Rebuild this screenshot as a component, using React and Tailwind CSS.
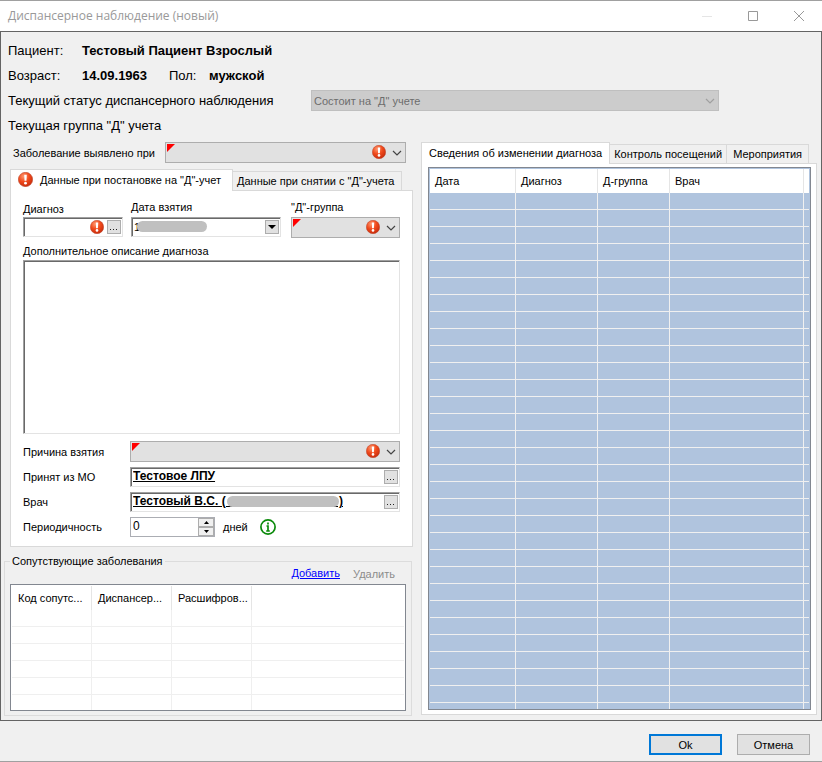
import clsx from 'clsx'

const HISTORY_COLUMNS = [
  { label: 'Дата', width: 'w-[86px]' },
  { label: 'Диагноз', width: 'w-[82px]' },
  { label: 'Д-группа', width: 'w-[72px]' },
  { label: 'Врач', width: '' },
]
const RELATED_COLUMNS = ['Код сопутс...', 'Диспансер...', 'Расшифров...']

function ErrorIcon({ className, id }) {
  return (
    <svg viewBox="0 0 14 14" className={className} role="img" aria-label="Ошибка">
      <defs>
        <radialGradient id={id} cx="0.38" cy="0.28" r="0.75">
          <stop offset="0" stopColor="#ff9a72" />
          <stop offset="0.5" stopColor="#f04a1c" />
          <stop offset="1" stopColor="#c82c0c" />
        </radialGradient>
      </defs>
      <circle cx="7" cy="7" r="6.7" fill={`url(#${id})`} stroke="#b8432a" strokeWidth="0.5" />
      <path d="M5.8 2.6h2.4l-.3 5.6H6.1z" fill="#fff" />
      <circle cx="7" cy="10.4" r="1.3" fill="#fff" />
    </svg>
  )
}

function Chevron({ className }) {
  return (
    <svg viewBox="0 0 10 6" className={clsx('w-[10px] h-[6px]', className)} fill="none" stroke="currentColor" strokeWidth="1.2">
      <path d="M1 1l4 4 4-4" />
    </svg>
  )
}

// Обязательный выпадающий список с признаком ошибки
function RequiredSelect({ id, label }) {
  return (
    <div className="relative w-full h-[21px]">
      <select id={id} aria-label={label} className="block w-full h-full appearance-none bg-[#e1e1e1] border border-[#adadad] outline-none">
        <option value=""></option>
      </select>
      <svg viewBox="0 0 8 8" className="absolute left-[2px] top-[2px] w-[8px] h-[8px] pointer-events-none">
        <path d="M0 0h8L0 8z" fill="#f00" />
      </svg>
      <ErrorIcon id={`${id}-err`} className="absolute right-[20px] top-[3px] w-[14px] h-[14px] pointer-events-none" />
      <Chevron className="absolute right-[4px] top-[8px] text-[#444] pointer-events-none" />
    </div>
  )
}

function Sunken({ className, children }) {
  return (
    <div className={clsx('flex items-center h-[20px] bg-white border border-t-[#a0a0a0] border-l-[#a0a0a0] border-r-[#e3e3e3] border-b-[#e3e3e3] shadow-[inset_1px_1px_0_#696969]', className)}>
      {children}
    </div>
  )
}

function MoreButton({ label }) {
  return (
    <button aria-label={label} className="shrink-0 w-[14px] h-[14px] mr-px bg-[#e1e1e1] border border-[#adadad] flex items-center justify-center">
      <svg viewBox="0 0 10 10" className="w-[10px] h-[10px]" fill="#222">
        <path d="M1 7h1v1H1zM4 7h1v1H4zM7 7h1v1H7z" />
      </svg>
    </button>
  )
}

function Tab({ active, className, children }) {
  return (
    <button
      role="tab"
      aria-selected={active}
      className={clsx(
        'flex items-center border border-b-0 border-[#d9d9d9] whitespace-nowrap',
        active ? 'relative z-10 h-[22px] -mb-px pb-[2px] bg-white' : 'h-[19px] bg-[#f0f0f0]',
        className,
      )}
    >
      {children}
    </button>
  )
}

function PatientHeader() {
  return (
    <section className="text-[13px] leading-[25px] whitespace-nowrap">
      <div className="flex">
        <span className="w-[74px]">Пациент:</span>
        <b>Тестовый Пациент Взрослый</b>
      </div>
      <div className="flex">
        <span className="w-[74px]">Возраст:</span>
        <b className="w-[87px]">14.09.1963</b>
        <span className="w-[40px]">Пол:</span>
        <b>мужской</b>
      </div>
      <div className="flex items-center h-[25px]">
        <label htmlFor="status" className="w-[303px]">Текущий статус диспансерного наблюдения</label>
        <div className="relative w-[408px]">
          <select id="status" disabled className="block w-full h-[21px] px-[2px] appearance-none bg-[#ccc] border border-[#bfbfbf] text-[11px] leading-[18px] text-[#6d6d6d] opacity-100">
            <option>Состоит на "Д" учете</option>
          </select>
          <Chevron className="absolute right-[4px] top-[8px] text-[#a0a0a0]" />
        </div>
      </div>
      <div>Текущая группа "Д" учета</div>
    </section>
  )
}

function RegistrationForm() {
  return (
    <div className="bg-white border border-[#d9d9d9] pl-[12px] pr-[12px] pt-[8px] pb-[9px]">
      <div className="flex gap-[8px]">
        <div className="w-[100px]">
          <label htmlFor="diagnosis" className="block h-[18px] leading-[20px]">Диагноз</label>
          <Sunken>
            <input id="diagnosis" className="flex-1 min-w-0 px-[2px] bg-transparent outline-none" />
            <ErrorIcon id="diagnosis-err" className="shrink-0 w-[14px] h-[14px] mr-[3px]" />
            <MoreButton label="Выбрать диагноз" />
          </Sunken>
        </div>
        <div className="w-[150px]">
          <label htmlFor="date" className="block h-[18px] leading-[16px]">Дата взятия</label>
          <Sunken className="relative">
            <input id="date" defaultValue="1" className="flex-1 min-w-0 px-[2px] bg-transparent outline-none" />
            <span className="absolute left-[5px] top-[3px] w-[70px] h-[11px] rounded-full bg-[#c0c0c0]" />
            <button aria-label="Открыть календарь" className="shrink-0 w-[14px] h-[14px] mr-px bg-[#e1e1e1] border border-[#adadad] flex items-center justify-center">
              <svg viewBox="0 0 8 4" className="w-[8px] h-[4px]"><path d="M0 0h8L4 4z" /></svg>
            </button>
          </Sunken>
        </div>
        <div className="flex-1 ml-[2px]">
          <label htmlFor="group" className="block h-[18px] leading-[16px]">"Д"-группа</label>
          <RequiredSelect id="group" />
        </div>
      </div>

      <label htmlFor="description" className="block mt-[4px] h-[18px] leading-[18px]">Дополнительное описание диагноза</label>
      <textarea id="description" className="block w-full h-[174px] resize-none bg-white border border-t-[#a0a0a0] border-l-[#a0a0a0] border-r-[#e3e3e3] border-b-[#e3e3e3] shadow-[inset_1px_1px_0_#696969] outline-none" />

      <div className="mt-[7px] grid grid-cols-[107px_1fr] items-center gap-y-[5px]">
        <label htmlFor="reason">Причина взятия</label>
        <RequiredSelect id="reason" />
        <label htmlFor="org">Принят из МО</label>
        <Sunken>
          <input id="org" defaultValue="Тестовое ЛПУ" className="flex-1 min-w-0 px-[2px] pb-[2px] bg-transparent font-bold text-[12px] leading-[14px] underline outline-none" />
          <MoreButton label="Выбрать МО" />
        </Sunken>
        <label htmlFor="doctor">Врач</label>
        <Sunken className="relative">
          <input id="doctor" defaultValue="Тестовый В.С. (                                  )" className="flex-1 min-w-0 px-[2px] pb-[2px] bg-transparent font-bold text-[12px] leading-[14px] underline outline-none" />
          <span className="absolute left-[96px] top-[3px] w-[112px] h-[11px] rounded-full bg-[#c0c0c0]" />
          <MoreButton label="Выбрать врача" />
        </Sunken>
        <label htmlFor="period">Периодичность</label>
        <div className="flex items-center">
          <div className="flex w-[85px] h-[20px] bg-white border border-[#abadb3]">
            <input id="period" defaultValue="0" className="flex-1 min-w-0 px-[2px] pb-[2px] text-[12px] outline-none" />
            <div className="flex flex-col w-[16px]">
              <button aria-label="Больше" className="flex-1 flex items-center justify-center bg-[#f0f0f0] border border-[#adadad]">
                <svg viewBox="0 0 5 3" className="w-[5px] h-[3px]"><path d="M2.5 0L5 3H0z" /></svg>
              </button>
              <button aria-label="Меньше" className="flex-1 flex items-center justify-center bg-[#f0f0f0] border border-[#adadad]">
                <svg viewBox="0 0 5 3" className="w-[5px] h-[3px]"><path d="M0 0h5L2.5 3z" /></svg>
              </button>
            </div>
          </div>
          <span className="ml-[8px]">дней</span>
          <svg viewBox="0 0 16 16" className="ml-[12px] w-[16px] h-[16px]" fill="none" stroke="#0a8a0a">
            <circle cx="8" cy="8" r="7.1" strokeWidth="1.7" />
            <path d="M8 3.6v1.8M6.5 7H8v5M6.2 12h3.6" strokeWidth="1.7" />
          </svg>
        </div>
      </div>
    </div>
  )
}

function RelatedDiseases() {
  return (
    <fieldset className="relative mt-[6px] ml-[-6px] mr-px border border-[#dcdcdc] px-[5px] pb-[4px]">
      <legend className="px-[2px] leading-[16px]">Сопутствующие заболевания</legend>
      <div className="-mt-[5px] flex justify-end gap-[13px] pr-[11px] h-[20px] leading-[18px]">
        <a href="#add" className="text-[#00f] underline">Добавить</a>
        <button disabled className="text-[#8c8c8c]">Удалить</button>
      </div>
      <div className="h-[127px] overflow-hidden bg-white border border-[#828790] p-px">
        <table className="w-full table-fixed border-separate border-spacing-0">
          <thead>
            <tr className="h-[24px]">
              {RELATED_COLUMNS.map(label => (
                <th key={label} className="w-[80px] pl-[6px] p-0 text-left font-normal whitespace-nowrap border-r border-[#e5e5e5]">{label}</th>
              ))}
              <th className="p-0" />
            </tr>
          </thead>
          <tbody>
            {Array.from({ length: 6 }, (_, i) => (
              <tr key={i} className="h-[17px]">
                {[0, 1, 2, 3].map(c => (
                  <td key={c} className={clsx('p-0 border-b border-[#efefef]', c < 3 && 'border-r')} />
                ))}
              </tr>
            ))}
          </tbody>
        </table>
      </div>
    </fieldset>
  )
}

function HistoryTable() {
  return (
    <div className="bg-white border border-[#d9d9d9] px-[5px] pl-[6px] pt-[3px] pb-[4px]">
      <div className="h-[543px] overflow-hidden bg-[#b0c4de] border border-[#828790] p-px">
        <table className="w-full table-fixed border-separate border-spacing-0">
          <thead>
            <tr className="h-[24px] bg-white">
              {HISTORY_COLUMNS.map(col => (
                <th key={col.label} className={clsx('pl-[5px] p-0 text-left font-normal border-r border-[#e5e5e5]', col.width)}>{col.label}</th>
              ))}
              <th className="w-[5px] p-0" />
            </tr>
          </thead>
          <tbody>
            {Array.from({ length: 31 }, (_, i) => (
              <tr key={i} className="h-[17px]">
                {[0, 1, 2, 3, 4].map(c => (
                  <td key={c} className={clsx('p-0 border-b border-[#f0f0f0]', c < 4 && 'border-r')} />
                ))}
              </tr>
            ))}
          </tbody>
        </table>
      </div>
    </div>
  )
}

export default function App() {
  return (
    <div className="min-h-screen flex flex-col bg-[#f0f0f0] border-y border-[#a0a0a0] font-['Liberation_Sans',Arial,sans-serif] text-[11px] leading-[14px] text-black">
      <header className="flex items-center h-[30px] bg-white pl-[8px] pr-[18px] text-[#999]">
        <h1 className="flex-1 font-['Open_Sans','Noto_Sans',sans-serif] text-[12px] leading-[16px]">Диспансерное наблюдение (новый)</h1>
        <div className="flex items-center gap-[36px]">
          <button aria-label="Свернуть" disabled>
            <svg viewBox="0 0 10 10" className="w-[10px] h-[10px]" stroke="#e5e5e5"><path d="M0 5.5h10" /></svg>
          </button>
          <button aria-label="Развернуть">
            <svg viewBox="0 0 10 10" className="w-[10px] h-[10px]" fill="none" stroke="#999"><path d="M.5.5h9v9h-9z" /></svg>
          </button>
          <button aria-label="Закрыть">
            <svg viewBox="0 0 10 10" className="w-[10px] h-[10px]" fill="none" stroke="#999"><path d="M0 0l10 10M10 0L0 10" /></svg>
          </button>
        </div>
      </header>

      <main className="border border-[#646464] pl-[7px] pr-[4px] pt-[6px] pb-[4px]">
        <PatientHeader />
        <div className="mt-[4px] flex gap-[8px]">
          <div className="w-[405px] shrink-0 pl-[2px]">
            <div className="flex items-center pl-[3px] pr-[7px]">
              <label htmlFor="detected" className="w-[152px] shrink-0">Заболевание выявлено при</label>
              <RequiredSelect id="detected" />
            </div>
            <div role="tablist" className="mt-[6px] flex items-end">
              <Tab active className="w-[223px] pl-[7px] gap-[7px]">
                <ErrorIcon id="tab-err" className="w-[15px] h-[15px]" />
                Данные при постановке на "Д"-учет
              </Tab>
              <Tab className="pl-[4px] pr-[7px] border-l-0">Данные при снятии с "Д"-учета</Tab>
            </div>
            <RegistrationForm />
            <RelatedDiseases />
          </div>
          <div className="flex-1 min-w-0">
            <div role="tablist" className="flex items-end">
              <Tab active className="px-[7px]">Сведения об изменении диагноза</Tab>
              <Tab className="px-[4px] border-l-0">Контроль посещений</Tab>
              <Tab className="px-[6px] border-l-0">Мероприятия</Tab>
            </div>
            <HistoryTable />
          </div>
        </div>
      </main>

      <footer className="flex justify-end gap-[15px] pt-[13px] pr-[12px]">
        <button className="w-[73px] h-[21px] bg-[#e1e1e1] border-2 border-[#0078d7]">Ok</button>
        <button className="w-[73px] h-[21px] bg-[#e1e1e1] border border-[#adadad]">Отмена</button>
      </footer>
    </div>
  )
}
